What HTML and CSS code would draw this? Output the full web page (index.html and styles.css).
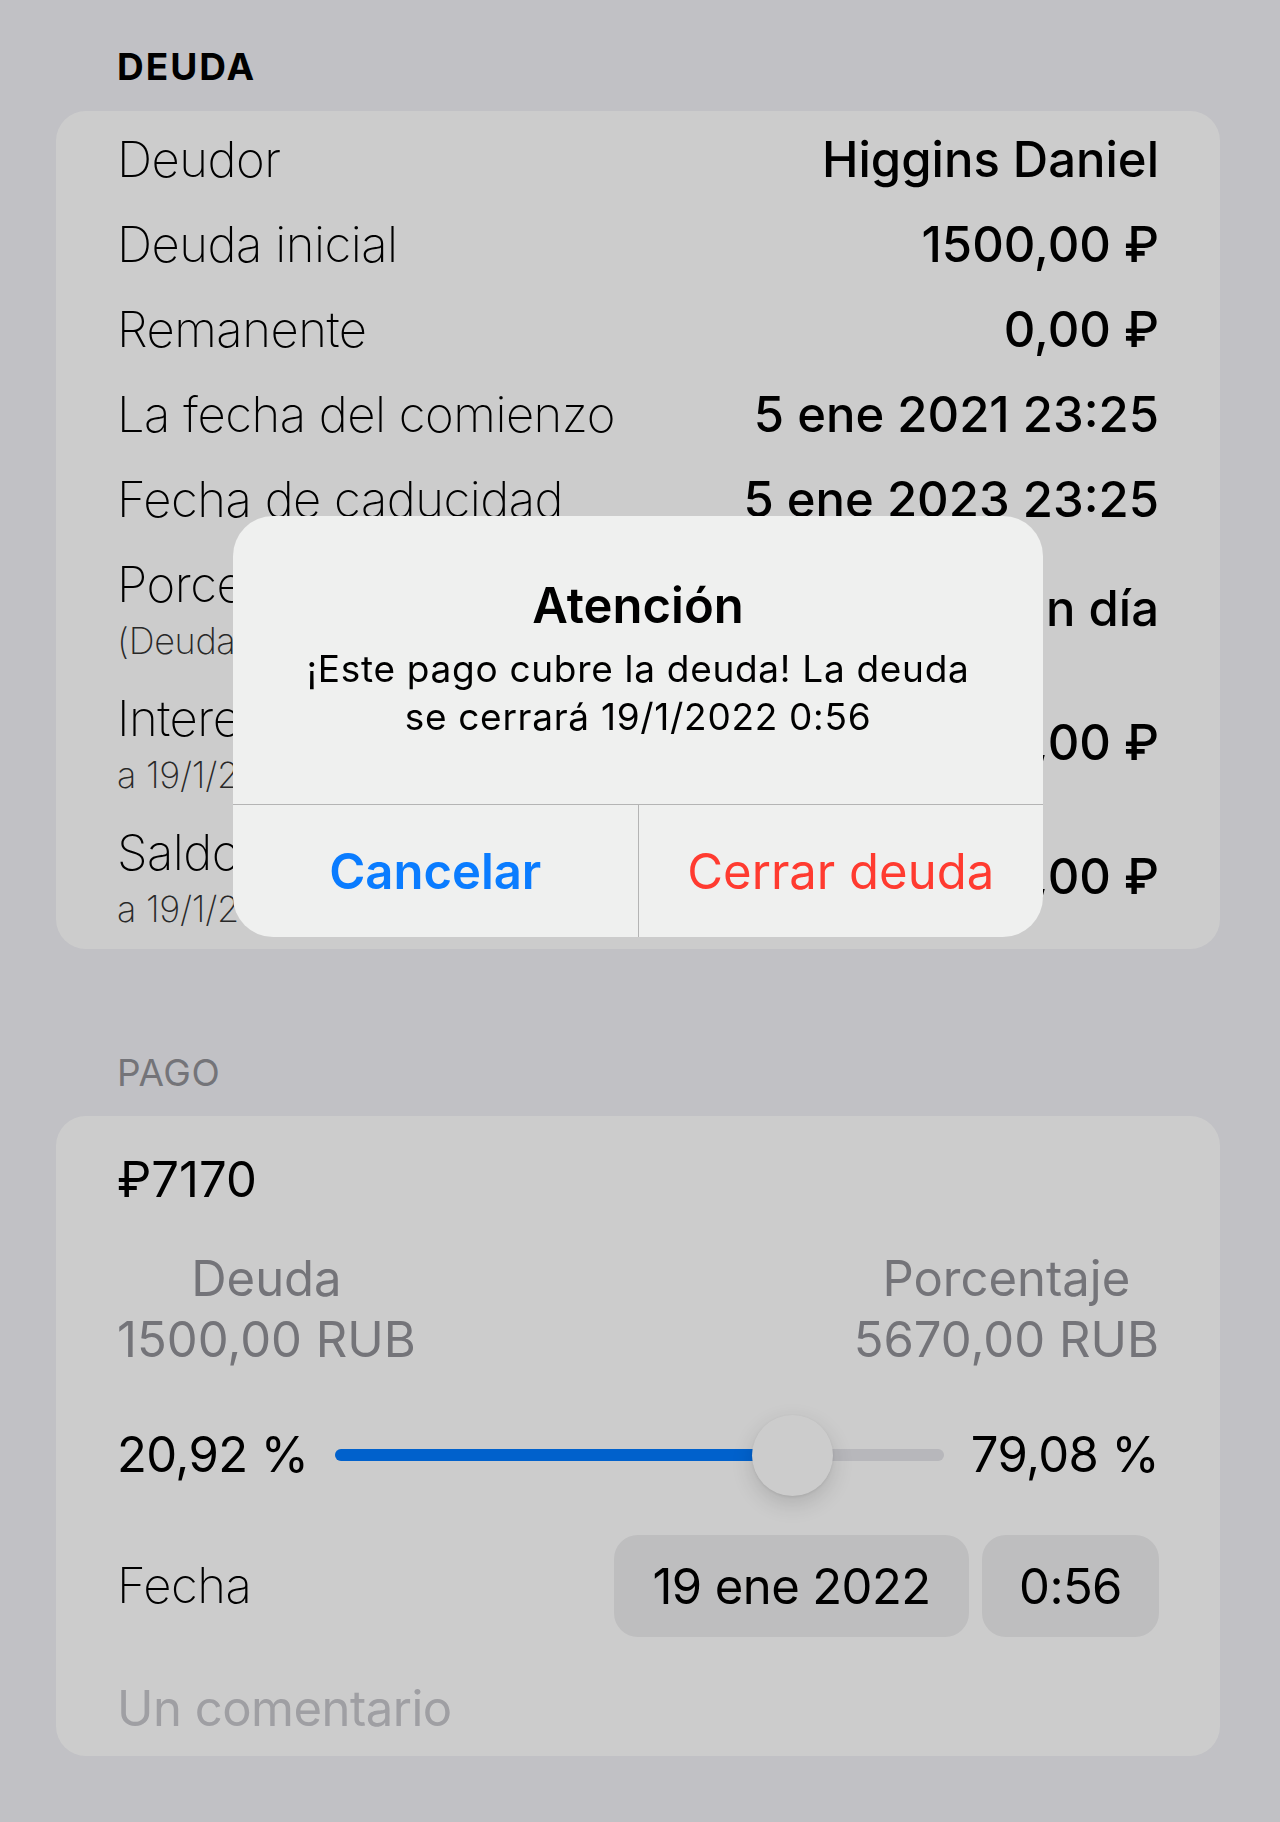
FILE: index.html
```html
<!DOCTYPE html>
<html lang="es">
<head>
<meta charset="utf-8">
<title>Deuda</title>
<link rel="stylesheet" href="styles.css">
</head>
<body>
<main class="screen">
  <h2 class="section-title section-title--strong">DEUDA</h2>
  <section class="card card--debt">
    <div class="row"><span class="label">Deudor</span><span class="value">Higgins Daniel</span></div>
    <div class="row"><span class="label">Deuda inicial</span><span class="value">1500,00 ₽</span></div>
    <div class="row"><span class="label">Remanente</span><span class="value">0,00 ₽</span></div>
    <div class="row"><span class="label">La fecha del comienzo</span><span class="value">5 ene 2021 23:25</span></div>
    <div class="row"><span class="label">Fecha de caducidad</span><span class="value">5 ene 2023 23:25</span></div>
    <div class="row row--tall">
      <div class="label-group"><span class="label">Porcentaje</span><span class="sublabel">(Deuda inicial)</span></div>
      <span class="value">1 % por un día</span>
    </div>
    <div class="row row--tall">
      <div class="label-group"><span class="label">Intereses</span><span class="sublabel">a 19/1/2022</span></div>
      <span class="value">5670,00 ₽</span>
    </div>
    <div class="row row--tall">
      <div class="label-group"><span class="label">Saldo</span><span class="sublabel">a 19/1/2022</span></div>
      <span class="value">7170,00 ₽</span>
    </div>
  </section>

  <h2 class="section-title section-title--spaced">PAGO</h2>
  <section class="card card--payment">
    <div class="amount-row">₽7170</div>
    <div class="split-row">
      <div class="split"><span>Deuda</span><span>1500,00 RUB</span></div>
      <div class="split"><span>Porcentaje</span><span>5670,00 RUB</span></div>
    </div>
    <div class="slider-row">
      <span class="percent">20,92 %</span>
      <div class="slider">
        <div class="slider-fill" style="width: calc(40.5px + 0.7908 * (100% - 81px));"></div>
        <div class="slider-thumb" style="left: calc(40.5px + 0.7908 * (100% - 81px));"></div>
      </div>
      <span class="percent">79,08 %</span>
    </div>
    <div class="date-row">
      <span class="label">Fecha</span>
      <div class="pills">
        <span class="pill pill--date">19 ene 2022</span>
        <span class="pill pill--time">0:56</span>
      </div>
    </div>
    <div class="comment-row">Un comentario</div>
  </section>
</main>

<div class="dim"></div>

<div class="alert" role="alertdialog">
  <div class="alert-body">
    <h3 class="alert-title">Atención</h3>
    <p class="alert-message">¡Este pago cubre la deuda! La deuda<br>se cerrará 19/1/2022 0:56</p>
  </div>
  <div class="alert-actions">
    <button class="alert-button alert-button--cancel">Cancelar</button>
    <button class="alert-button alert-button--destructive">Cerrar deuda</button>
  </div>
</div>
</body>
</html>
```

FILE: styles.css
```css
html {
  background: #f2f2f7;
}

body {
  margin: 0;
  min-height: 1822px;
  font-family: Inter, "Noto Sans", "DejaVu Sans", sans-serif;
  color: #000;
}

.screen {
  padding: 45px 0 66px 56px;
}

.section-title {
  margin: 0 0 22px;
  padding-left: 61px;
  font-size: 37px;
  line-height: 44px;
  font-weight: 400;
  letter-spacing: 0.6px;
  color: #929298;
}

.section-title--strong {
  font-weight: 700;
  letter-spacing: 2px;
  color: #000;
}

.section-title--spaced {
  margin-top: 102px;
  margin-bottom: 21px;
}

.card {
  width: 1164px;
  box-sizing: border-box;
  background: #fff;
  border-radius: 30px;
}

.card--debt {
  padding: 6px 61px 5px 61px;
}

.row {
  display: flex;
  justify-content: space-between;
  align-items: center;
  height: 85px;
}

.row--tall {
  height: 134px;
}

.label {
  font-size: 49px;
  line-height: 60px;
  font-weight: 250;
  letter-spacing: -0.5px;
  white-space: nowrap;
}

.value {
  font-size: 49px;
  line-height: 60px;
  font-weight: 500;
  white-space: nowrap;
}

.label-group {
  display: flex;
  flex-direction: column;
}

.label-group .label {
  line-height: 64px;
}

.sublabel {
  font-size: 36px;
  line-height: 48px;
  font-weight: 250;
  letter-spacing: -0.3px;
  color: #333;
  white-space: nowrap;
}

.card--payment {
  padding: 0 61px 17px 61px;
}

.amount-row {
  height: 126px;
  display: flex;
  align-items: center;
  font-size: 49px;
}

.split-row {
  margin-top: 6px;
  display: flex;
  justify-content: space-between;
  font-size: 49px;
  line-height: 61px;
  color: #929298;
}

.split {
  display: flex;
  flex-direction: column;
  align-items: center;
}

.slider-row {
  margin-top: 35px;
  height: 100px;
  display: flex;
  align-items: center;
  gap: 27px;
}

.percent {
  font-size: 49px;
  line-height: 60px;
  letter-spacing: -0.6px;
  white-space: nowrap;
}

.slider {
  flex: 1;
  position: relative;
  height: 12px;
  border-radius: 6px;
  background: #e5e5ea;
}

.slider-fill {
  position: absolute;
  left: 0;
  top: 0;
  bottom: 0;
  border-radius: 6px;
  background: #007aff;
}

.slider-thumb {
  position: absolute;
  top: 50%;
  width: 81px;
  height: 81px;
  margin: -40.5px 0 0 -40.5px;
  border-radius: 50%;
  background: #fff;
  box-shadow: 0 8px 22px rgba(0, 0, 0, 0.14), 0 1px 3px rgba(0, 0, 0, 0.08);
}

.date-row {
  margin-top: 30px;
  height: 102px;
  display: flex;
  justify-content: space-between;
  align-items: center;
}

.pills {
  display: flex;
  gap: 13px;
}

.pill {
  height: 102px;
  box-sizing: border-box;
  display: flex;
  align-items: center;
  justify-content: center;
  border-radius: 24px;
  background: #eeeeef;
  font-size: 49px;
  letter-spacing: -0.6px;
  white-space: nowrap;
}

.pill--date {
  width: 355px;
}

.pill--time {
  width: 177px;
}

.comment-row {
  margin-top: 42px;
  height: 60px;
  font-size: 49px;
  line-height: 60px;
  letter-spacing: -0.5px;
  color: #c7c7cc;
}

.dim {
  position: fixed;
  inset: 0;
  background: rgba(0, 0, 0, 0.2);
}

.alert {
  position: absolute;
  left: 233px;
  top: 516px;
  width: 810px;
  height: 421px;
  border-radius: 40px;
  background: #eff0ef;
  overflow: hidden;
  display: flex;
  flex-direction: column;
}

.alert-body {
  height: 288px;
  box-sizing: border-box;
  padding-top: 60px;
  text-align: center;
}

.alert-title {
  margin: 0;
  font-size: 49px;
  line-height: 60px;
  font-weight: 600;
}

.alert-message {
  margin: 9px 0 0;
  font-size: 37px;
  line-height: 48px;
  font-weight: 400;
  letter-spacing: 0.7px;
}

.alert-actions {
  flex: 1;
  display: flex;
  border-top: 1px solid #b4b4b4;
}

.alert-button {
  flex: 1;
  display: flex;
  align-items: center;
  justify-content: center;
  padding: 0;
  border: 0;
  background: none;
  font-family: inherit;
  font-size: 49px;
}

.alert-button + .alert-button {
  border-left: 1px solid #b4b4b4;
}

.alert-button--cancel {
  color: #0a7cff;
  font-weight: 600;
}

.alert-button--destructive {
  color: #ff3b30;
  font-weight: 400;
}
```
